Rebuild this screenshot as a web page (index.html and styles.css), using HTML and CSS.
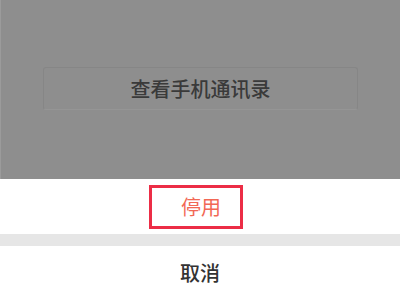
FILE: index.html
```html
<!DOCTYPE html>
<html lang="zh-CN">
<head>
    <meta charset="UTF-8">
    <meta name="viewport" content="width=device-width, initial-scale=1.0">
    <title>通讯录</title>
    <link rel="stylesheet" href="styles.css">
</head>
<body>
    <div id="screen">
        <div id="dim">
            <div id="contacts-button">查看手机通讯录</div>
        </div>
        <div id="sheet">
            <div class="action-row">
                <div id="highlight">
                    <span class="action-text danger">停用</span>
                </div>
            </div>
            <div class="divider"></div>
            <div class="action-row cancel-row">
                <span class="action-text">取消</span>
            </div>
        </div>
    </div>
</body>
</html>
```

FILE: styles.css
```css
body {
    margin: 0;
    font-family: "Noto Sans CJK SC", "Noto Sans", sans-serif;
    background: #8f8f8f;
}

#screen {
    width: 400px;
    height: 300px;
    display: flex;
    flex-direction: column;
    overflow: hidden;
}

#dim {
    height: 179px;
    box-sizing: border-box;
    padding: 67px 42px 0 43px;
    background: #8e8e8e;
    border-left: 1px solid #9b9b9b;
}

#contacts-button {
    height: 43px;
    box-sizing: border-box;
    margin-left: -1px;
    border: 1px solid #868686;
    border-bottom-color: #959595;
    border-radius: 3px;
    display: flex;
    justify-content: center;
    align-items: center;
    font-size: 20px;
    font-weight: 500;
    color: #3a3a3a;
}

#sheet {
    flex: 1;
    background: #ffffff;
    display: flex;
    flex-direction: column;
}

.action-row {
    height: 55px;
    display: flex;
    justify-content: center;
    align-items: center;
}

.cancel-row {
    height: 54px;
}

#highlight {
    width: 94px;
    height: 44px;
    box-sizing: border-box;
    margin-right: 8px;
    padding-left: 29px;
    border: 3px solid #ec2d46;
    display: flex;
    align-items: center;
}

.action-text {
    font-size: 20px;
    line-height: 20px;
    font-weight: 500;
    color: #333333;
}

.danger {
    font-weight: 400;
    color: #f26855;
}

.divider {
    height: 12px;
    background: #e6e6e6;
}
```
